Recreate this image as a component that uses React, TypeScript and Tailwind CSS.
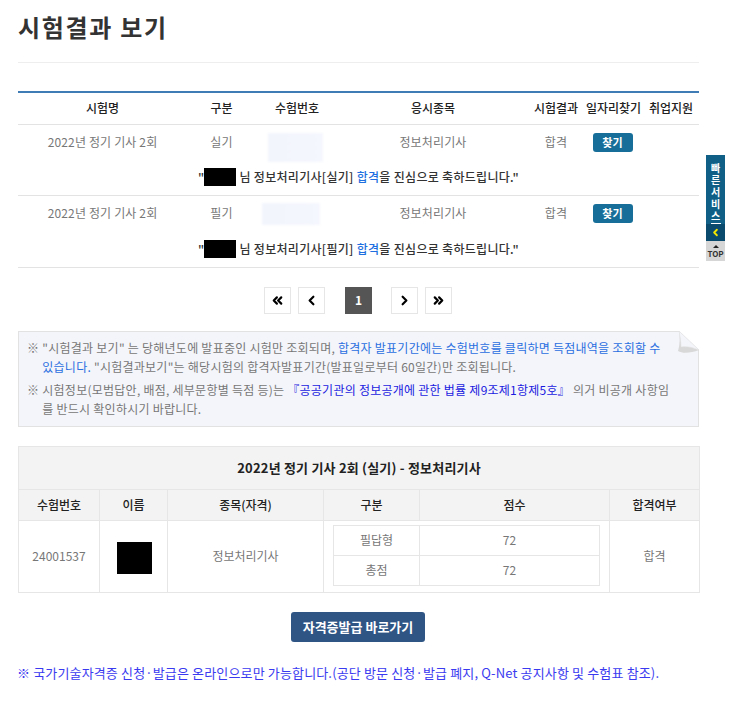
import { ChevronLeft, ChevronRight, ChevronsLeft, ChevronsRight } from 'lucide-react'

const fontStack = 'font-["Malgun_Gothic","Noto_Sans_CJK_KR","Noto_Sans",sans-serif]'

const examRows = [
  { kind: '실기', blurClass: 'ml-[12px] h-[29px] w-[55px] translate-y-[5px]', messageHeight: 'h-[35px]' },
  { kind: '필기', blurClass: 'ml-[6px] h-[22px] w-[58px] translate-y-px', messageHeight: 'h-[36px]' },
]

function PageButton({ children, active }: { children: React.ReactNode; active?: boolean }) {
  return (
    <button
      type="button"
      className={`flex h-[27px] w-[27px] items-center justify-center text-[12px] font-bold ${
        active ? 'bg-[#555555] text-white' : 'border border-[#e6e6e6] bg-white text-black'
      }`}
    >
      {children}
    </button>
  )
}

function SideMenu() {
  return (
    <div className="absolute left-[706px] top-[155px] w-[19px]">
      <div className="flex h-[69px] flex-col items-center bg-[#0f5f86] pt-[8px] text-white">
        <span className="text-[10px] font-bold leading-[19px] tracking-[2px] [writing-mode:vertical-rl]">빠른서비스</span>
        <div className="h-px w-[10px] bg-white" />
      </div>
      <div className="flex h-[17px] items-center justify-center bg-[#0a4a6c]">
        <ChevronLeft size={11} strokeWidth={4} className="text-[#f5e600]" />
      </div>
      <div className="flex h-[20px] flex-col items-center justify-center bg-[#d6d6d6] text-[#333333]">
        <span className="h-0 w-0 border-x-[3px] border-b-[3px] border-x-transparent border-b-[#222222]" />
        <span className="mt-[1px] text-[8px] font-bold leading-[9px]">TOP</span>
      </div>
    </div>
  )
}

function NoteBox() {
  return (
    <div className="relative mt-[17px] h-[96px] border border-[#e2e2e2] bg-[#f4f5fa] pl-[8px] pt-[6px] text-[12px] leading-[19px] tracking-[0.25px] text-[#777777]">
      <div className="flex gap-[3px] whitespace-nowrap">
        <span>※</span>
        <p>
          "시험결과 보기" 는 당해년도에 발표중인 시험만 조회되며,{' '}
          <span className="text-[#2a6fe0]">합격자 발표기간에는 수험번호를 클릭하면 득점내역을 조회할 수</span>
          <br />
          <span className="text-[#2a6fe0]">있습니다.</span> "시험결과보기"는 해당시험의 합격자발표기간(발표일로부터 60일간)만 조회됩니다.
        </p>
      </div>
      <div className="mt-[4px] flex gap-[3px] whitespace-nowrap">
        <span>※</span>
        <p>
          시험정보(모범답안, 배점, 세부문항별 득점 등)는{' '}
          <span className="text-[#1a1ae0]">『공공기관의 정보공개에 관한 법률 제9조제1항제5호』</span> 의거 비공개 사항임
          <br />를 반드시 확인하시기 바랍니다.
        </p>
      </div>
      {/* folded corner */}
      <svg className="absolute -right-px -top-px" width="22" height="23" viewBox="0 0 22 23">
        <path d="M2 0 H22 V19 Z" fill="#ffffff" />
        <path d="M2 0 L22 19 C14 22 6 23 1 20 C3 14 3 6 2 0 Z" fill="#d8d8d8" />
        <path d="M2 0 L22 19 C15 16 9 15 4 16 C4 10 3 5 2 0 Z" fill="#f4f5fa" stroke="#e0e0e0" strokeWidth="0.5" />
      </svg>
    </div>
  )
}

function ExamRow({ kind, blurClass, messageHeight }: { kind: string; blurClass: string; messageHeight: string }) {
  return (
    <>
      <tr className="h-[36px] text-center tracking-[0.15px] text-[#777777]">
        <td>2022년 정기 기사 2회</td>
        <td>{kind}</td>
        <td>
          <div className={`bg-gradient-to-r from-[#f3f5fd] to-[#f5f7fe] blur-[1px] ${blurClass}`} />
        </td>
        <td>정보처리기사</td>
        <td>합격</td>
        <td>
          <button
            type="button"
            className="h-[19px] w-[40px] -translate-x-px rounded-[3px] bg-[#176f99] text-[11px] font-bold text-white"
          >
            찾기
          </button>
        </td>
        <td />
      </tr>
      <tr className={`${messageHeight} border-b border-[#e3e3e3] text-center font-medium tracking-[0.3px] text-[#333333]`}>
        <td colSpan={7}>
          <span className="inline-flex items-center whitespace-nowrap">
            "
            <span className="ml-px mr-[2px] inline-block h-[18px] w-[32px] -translate-x-px bg-black" />
            님 정보처리기사[{kind}]&nbsp;<span className="text-[#1f6fe0]">합격</span>을 진심으로 축하드립니다."
          </span>
        </td>
      </tr>
    </>
  )
}

export default function App() {
  return (
    <div className={`relative h-[705px] w-[743px] overflow-hidden bg-white ${fontStack}`}>
      <SideMenu />
      <div className="ml-[18px] w-[681px]">
        <h1 className="pt-[11px] text-[24px] font-bold leading-[32px] tracking-[1.7px] text-[#333333]">시험결과 보기</h1>
        <div className="mt-[19px] h-px bg-[#eeeeee]" />

        <table className="mt-[28px] w-full table-fixed border-t-2 border-[#3f7cb5] text-[12px]">
          <colgroup>
            <col className="w-[169px]" />
            <col className="w-[69px]" />
            <col className="w-[82px]" />
            <col className="w-[190px]" />
            <col className="w-[56px]" />
            <col className="w-[59px]" />
            <col className="w-[56px]" />
          </colgroup>
          <thead>
            <tr className="h-[32px] border-b border-[#e3e3e3] text-[#222222]">
              <th className="font-medium">시험명</th>
              <th className="font-medium">구분</th>
              <th className="font-medium">수험번호</th>
              <th className="font-medium">응시종목</th>
              <th className="whitespace-nowrap font-medium">시험결과</th>
              <th className="whitespace-nowrap font-medium">일자리찾기</th>
              <th className="whitespace-nowrap font-medium">취업지원</th>
            </tr>
          </thead>
          <tbody>
            {examRows.map((row) => (
              <ExamRow key={row.kind} kind={row.kind} blurClass={row.blurClass} messageHeight={row.messageHeight} />
            ))}
          </tbody>
        </table>

        <div className="mt-[19px] flex items-center">
          <div className="ml-[246px] flex">
            <PageButton><ChevronsLeft size={15} strokeWidth={3.5} /></PageButton>
            <div className="w-[7px]" />
            <PageButton><ChevronLeft size={15} strokeWidth={3.5} /></PageButton>
            <div className="w-[20px]" />
            <PageButton active>1</PageButton>
            <div className="w-[19px]" />
            <PageButton><ChevronRight size={15} strokeWidth={3.5} /></PageButton>
            <div className="w-[7px]" />
            <PageButton><ChevronsRight size={15} strokeWidth={3.5} /></PageButton>
          </div>
        </div>

        <NoteBox />

        <table className="mt-[19px] w-full table-fixed border-collapse border border-[#e6e6e6] text-[12px]">
          <colgroup>
            <col className="w-[81px]" />
            <col className="w-[68px]" />
            <col className="w-[156px]" />
            <col className="w-[96px]" />
            <col className="w-[190px]" />
            <col className="w-[90px]" />
          </colgroup>
          <thead className="bg-[#f3f3f3] text-[#222222]">
            <tr className="h-[43px] border-b border-[#e6e6e6]">
              <th colSpan={6} className="text-[13px] font-bold tracking-[0.2px]">
                2022년 정기 기사 2회 (실기) - 정보처리기사
              </th>
            </tr>
            <tr className="h-[31px] border-b border-[#e6e6e6]">
              <th className="border-r border-[#e6e6e6] font-medium">수험번호</th>
              <th className="border-r border-[#e6e6e6] font-medium">이름</th>
              <th className="border-r border-[#e6e6e6] font-medium">종목(자격)</th>
              <th className="border-r border-[#e6e6e6] font-medium">구분</th>
              <th className="border-r border-[#e6e6e6] font-medium">점수</th>
              <th className="font-medium">합격여부</th>
            </tr>
          </thead>
          <tbody className="text-center text-[#777777]">
            <tr className="h-[72px]">
              <td className="border-r border-[#e6e6e6]">24001537</td>
              <td className="border-r border-[#e6e6e6]">
                <div className="ml-[17px] mt-[4px] h-[32px] w-[35px] bg-black" />
              </td>
              <td className="border-r border-[#e6e6e6]">정보처리기사</td>
              <td colSpan={2} className="border-r border-[#e6e6e6] pb-[2px] pl-[9px] pr-[9px]">
                <table className="w-full table-fixed border-collapse border border-[#e6e6e6]">
                  <colgroup>
                    <col className="w-[86px]" />
                    <col />
                  </colgroup>
                  <tbody>
                    <tr className="h-[30px] border-b border-[#e6e6e6]">
                      <td className="border-r border-[#e6e6e6]">필답형</td>
                      <td>72</td>
                    </tr>
                    <tr className="h-[30px]">
                      <td className="border-r border-[#e6e6e6]">총점</td>
                      <td>72</td>
                    </tr>
                  </tbody>
                </table>
              </td>
              <td>합격</td>
            </tr>
          </tbody>
        </table>

        <div className="mt-[19px] flex justify-center">
          <button
            type="button"
            className="ml-[-1px] h-[30px] w-[134px] rounded-[3px] bg-[#2f5585] text-[13px] font-bold text-white"
          >
            자격증발급 바로가기
          </button>
        </div>

        <p className="ml-[-1px] mt-[22px] whitespace-nowrap text-[13px] leading-[18px] tracking-[0.15px] text-[#3a3af0]">
          ※ 국가기술자격증 신청·발급은 온라인으로만 가능합니다.(공단 방문 신청·발급 폐지, Q-Net 공지사항 및 수험표 참조).
        </p>
      </div>
    </div>
  )
}
